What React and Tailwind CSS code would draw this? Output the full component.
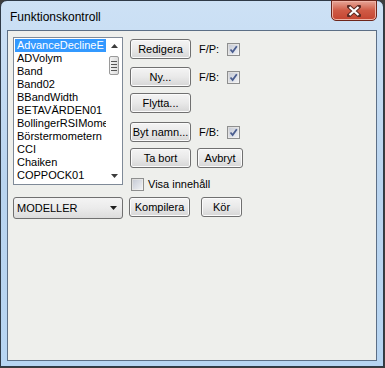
const items = [
  'AdvanceDeclineE',
  'ADVolym',
  'Band',
  'Band02',
  'BBandWidth',
  'BETAVÄRDEN01',
  'BollingerRSIMome',
  'Börstermometern',
  'CCI',
  'Chaiken',
  'COPPOCK01',
];

function Btn({ children, className = '' }) {
  return (
    <div
      className={`flex h-[20px] items-center justify-center rounded-[3px] border border-[#707070] bg-gradient-to-b from-[#f4f4f4] via-[#e9e9e9] to-[#d6d6d6] text-[11px] text-black shadow-[inset_0_0_0_1px_#fbfbfb] ${className}`}
    >
      {children}
    </div>
  );
}

function Check({ checked }) {
  return (
    <div className="flex h-[13px] w-[13px] items-center justify-center border border-[#8e8f8f] bg-gradient-to-br from-[#d9d9d9] to-[#f6f6f6]">
      <div className="flex h-[9px] w-[9px] items-center justify-center bg-gradient-to-br from-[#c8ccd6] to-[#eef0f4]">
        {checked ? (
          <svg width="9" height="9" viewBox="0 0 9 9">
            <path d="M1.5 4.5 L3.6 7 L7.8 1.2" fill="none" stroke="#4a5d8f" strokeWidth="1.8" />
          </svg>
        ) : null}
      </div>
    </div>
  );
}

export default function App() {
  return (
    <div
      className="h-[368px] w-[385px] bg-[#3d3d3d]"
      style={{ fontFamily: '"Liberation Sans", Arial, sans-serif' }}
    >
      <div className="flex h-[367px] w-[384px] flex-col rounded-t-[7px] border border-[#2f3a47] bg-gradient-to-b from-[#cde1f5] via-[#b9d4ef] to-[#b7d5f2]">
        <div className="relative flex h-[29px] shrink-0 items-start">
          <div className="ml-[9px] mt-[9px] text-[12px] leading-[14px] text-black">Funktionskontroll</div>
          <div className="absolute right-[6px] top-[-1px] flex h-[21px] w-[46px] items-center justify-center rounded-b-[5px] border border-[#6d261b] bg-gradient-to-b from-[#e6a597] via-[#cf5a45] to-[#c44430] shadow-[inset_0_0_0_1px_#efb3a6]">
            <svg width="14" height="12" viewBox="0 0 14 12">
              <path d="M2 1.5 L12 10.5 M12 1.5 L2 10.5" stroke="#5b2a24" strokeWidth="4" strokeLinecap="square" />
              <path d="M2.5 2 L11.5 10 M11.5 2 L2.5 10" stroke="#ffffff" strokeWidth="2.2" />
            </svg>
          </div>
        </div>
        <div className="mx-[6px] h-[331px] border border-[#5c6f86] bg-[#eeefec] text-[11px] text-black">
          <div className="flex pl-[5px] pt-[6px]">
            <div className="relative h-[148px] w-[110px] border border-[#7f8a98] bg-white">
              <div className="pl-[1px] pt-[1px]">
                {items.map((it, i) => (
                  <div
                    key={it}
                    className={`h-[13px] w-[91px] overflow-hidden whitespace-nowrap pl-[2px] leading-[13px] ${
                      i === 0 ? 'bg-[#3399ff] text-white' : ''
                    }`}
                  >
                    {it}
                  </div>
                ))}
              </div>
              <div className="absolute right-0 top-0 flex h-full w-[16px] flex-col items-center">
                <div className="flex h-[16px] items-center justify-center">
                  <svg width="7" height="4" viewBox="0 0 7 4">
                    <path d="M0 4 L3.5 0 L7 4 Z" fill="#3c3c3c" />
                  </svg>
                </div>
                <div className="mt-[2px] flex h-[19px] w-[10px] flex-col items-center justify-center gap-[2px] rounded-[2px] border border-[#9a9a9a] bg-gradient-to-r from-[#f3f3f3] to-[#dcdcdc]">
                  <div className="h-px w-[6px] bg-[#555]" />
                  <div className="h-px w-[6px] bg-[#555]" />
                  <div className="h-px w-[6px] bg-[#555]" />
                  <div className="h-px w-[6px] bg-[#555]" />
                </div>
                <div className="flex-1" />
                <div className="flex h-[16px] items-center justify-center">
                  <svg width="7" height="4" viewBox="0 0 7 4">
                    <path d="M0 0 L3.5 4 L7 0 Z" fill="#3c3c3c" />
                  </svg>
                </div>
              </div>
            </div>
            <div className="ml-[7px] mt-[2px] flex flex-col">
              <div className="flex h-[20px] items-center">
                <Btn className="w-[61px]">Redigera</Btn>
                <span className="ml-[8px] w-[28px]">F/P:</span>
                <Check checked />
              </div>
              <div className="mt-[8px] flex h-[20px] items-center">
                <Btn className="w-[61px]">Ny...</Btn>
                <span className="ml-[8px] w-[28px]">F/B:</span>
                <Check checked />
              </div>
              <div className="mt-[6px] flex h-[20px] items-center">
                <Btn className="w-[61px]">Flytta...</Btn>
              </div>
              <div className="mt-[9px] flex h-[20px] items-center">
                <Btn className="w-[61px]">Byt namn...</Btn>
                <span className="ml-[8px] w-[28px]">F/B:</span>
                <Check checked />
              </div>
              <div className="mt-[6px] flex h-[20px] items-center">
                <Btn className="w-[61px]">Ta bort</Btn>
                <Btn className="ml-[6px] w-[46px]">Avbryt</Btn>
              </div>
              <div className="ml-[1px] mt-[10px] flex h-[13px] items-center">
                <Check />
                <span className="ml-[4px]">Visa innehåll</span>
              </div>
            </div>
          </div>
          <div className="mt-[6px] flex items-start pl-[5px]">
            <div className="flex h-[22px] w-[110px] items-center justify-between rounded-[3px] border border-[#707070] bg-gradient-to-b from-[#f4f4f4] via-[#ebebeb] to-[#dcdcdc] pl-[3px] pr-[5px]">
              <span>MODELLER</span>
              <svg width="7" height="4" viewBox="0 0 7 4">
                <path d="M0 0 L3.5 4 L7 0 Z" fill="#1e1e1e" />
              </svg>
            </div>
            <Btn className="ml-[6px] w-[61px]">Kompilera</Btn>
            <Btn className="ml-[11px] w-[41px]">Kör</Btn>
          </div>
        </div>
      </div>
    </div>
  );
}
